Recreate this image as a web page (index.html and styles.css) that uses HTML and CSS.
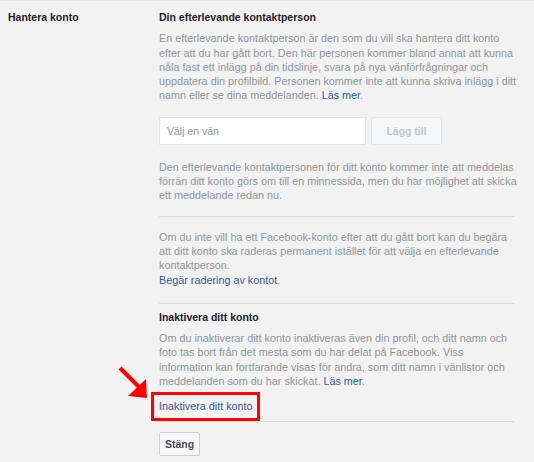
FILE: index.html
```html
<!DOCTYPE html>
<html lang="sv">
<head>
    <meta charset="UTF-8">
    <meta name="viewport" content="width=device-width, initial-scale=1.0">
    <title>Hantera konto</title>
    <link rel="stylesheet" href="styles.css">
</head>
<body>
    <section class="settings-row">
        <div class="settings-label">Hantera konto</div>
        <div class="settings-content">
            <h3>Din efterlevande kontaktperson</h3>
            <p>En efterlevande kontaktperson är den som du vill ska hantera ditt konto efter att du har gått bort. Den här personen kommer bland annat att kunna nåla fast ett inlägg på din tidslinje, svara på nya vänförfrågningar och uppdatera din profilbild. Personen kommer inte att kunna skriva inlägg i ditt namn eller se dina meddelanden. <a href="#">Läs mer</a>.</p>
            <form class="contact-form">
                <input type="text" placeholder="Välj en vän">
                <button type="button" disabled>Lägg till</button>
            </form>
            <p>Den efterlevande kontaktpersonen för ditt konto kommer inte att meddelas förrän ditt konto görs om till en minnessida, men du har möjlighet att skicka ett meddelande redan nu.</p>

            <div class="divider divider-first"></div>

            <p>Om du inte vill ha ett Facebook-konto efter att du gått bort kan du begära att ditt konto ska raderas permanent istället för att välja en efterlevande kontaktperson.<br><a href="#">Begär radering av kontot</a>.</p>

            <div class="divider divider-before-title"></div>

            <h3>Inaktivera ditt konto</h3>
            <p>Om du inaktiverar ditt konto inaktiveras även din profil, och ditt namn och foto tas bort från det mesta som du har delat på Facebook. Viss information kan fortfarande visas för andra, som ditt namn i vänlistor och meddelanden som du har skickat. <a href="#">Läs mer</a>.</p>
            <div class="highlight">
                <svg class="arrow" width="40" height="40" viewBox="0 0 40 40">
                    <line x1="5" y1="3" x2="25" y2="23" stroke="#f00" stroke-width="4"/>
                    <polygon points="32,33 13,31 31,14" fill="#f00"/>
                </svg>
                <a href="#">Inaktivera ditt konto</a>
            </div>
            <div class="divider divider-tight"></div>
            <button type="button" class="close-btn">Stäng</button>
        </div>
    </section>
</body>
</html>
```

FILE: styles.css
```css
body {
    margin: 0;
    font-family: "Liberation Sans", Arial, sans-serif;
    font-size: 10.8px;
    line-height: 14.3px;
    color: #90949c;
    background-color: #f2f2f2;
    border-top: 1px solid #e6e6e6;
}
a {
    color: #365899;
    text-decoration: none;
}
.settings-row {
    display: flex;
    padding: 9px 0 0 8px;
}
.settings-label {
    width: 151px;
    flex-shrink: 0;
    font-size: 10.5px;
    font-weight: bold;
    color: #1d2129;
}
.settings-content {
    width: 355px;
}
.settings-content h3 {
    margin: 0 0 7px;
    font-size: 10.5px;
    color: #1d2129;
}
.settings-content p {
    margin: 0 -3px 0 0;
}
.contact-form {
    display: flex;
    gap: 5px;
    margin: 14px 0 15px;
}
.contact-form input {
    width: 207px;
    height: 28px;
    box-sizing: border-box;
    margin: 0;
    padding: 0 7px;
    border: 1px solid #e3e3e3;
    background-color: white;
    font-family: inherit;
    font-size: 10.5px;
    color: #1d2129;
}
.contact-form input::placeholder {
    color: #90949c;
}
.contact-form button {
    width: 71px;
    height: 28px;
    margin: 0;
    border: 1px solid #e3e4e7;
    border-radius: 2px;
    background-color: #f6f7f9;
    color: #c3c6cc;
    font-family: inherit;
    font-size: 10.5px;
    font-weight: bold;
}
.divider {
    height: 1px;
    background-color: #dcdcdc;
    margin: 15px 0 13px;
}
.settings-content p + .divider {
    margin-top: 16px;
}
.settings-content p + .divider-first {
    margin-top: 13px;
}
.settings-content .divider-before-title {
    margin-bottom: 6px;
}
.highlight {
    position: relative;
    display: inline-block;
    margin: 4px 0 0 -8px;
    padding: 4px 4px 4px 5px;
    border: 3px solid #f00;
}
.arrow {
    position: absolute;
    left: -39px;
    top: -30px;
}
.divider-tight {
    margin: 0 0 10px;
}
.close-btn {
    height: 24px;
    padding: 0 5px;
    border: 1px solid #ced0d4;
    border-radius: 2px;
    background-color: #f6f7f9;
    color: #4b4f56;
    font-family: inherit;
    font-size: 10.5px;
    font-weight: bold;
}
```
